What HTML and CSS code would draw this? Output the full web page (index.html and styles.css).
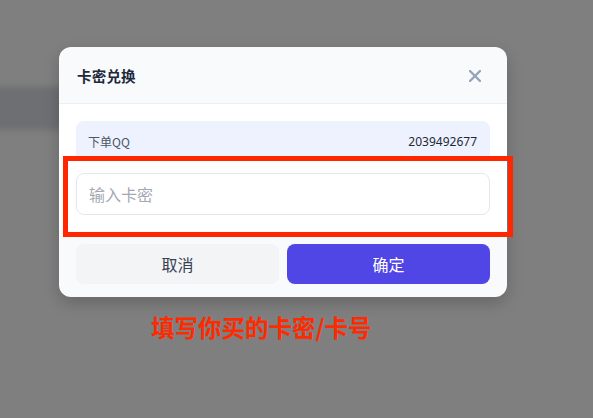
FILE: index.html
```html
<!DOCTYPE html>
<html lang="zh-CN">
<head>
<meta charset="utf-8">
<title>卡密兑换</title>
<link rel="stylesheet" href="styles.css">
</head>
<body>
<div class="stage">
  <div class="bg-band"></div>
  <div class="modal">
    <div class="modal-header">
      <span class="modal-title">卡密兑换</span>
      <svg class="close" width="12" height="12" viewBox="0 0 12 12" aria-hidden="true">
        <path d="M1 1 L11 11 M11 1 L1 11" stroke="#94a3b8" stroke-width="2.4" stroke-linecap="round" fill="none"/>
      </svg>
    </div>
    <div class="modal-body">
      <div class="info-row">
        <span class="info-label">下单QQ</span>
        <span class="info-value">2039492677</span>
      </div>
      <input class="code-input" type="text" placeholder="输入卡密">
    </div>
    <div class="modal-footer">
      <button class="btn btn-cancel">取消</button>
      <button class="btn btn-ok">确定</button>
    </div>
  </div>
  <div class="highlight"></div>
  <div class="note">填写你买的卡密/卡号</div>
</div>
</body>
</html>
```

FILE: styles.css
```css
html, body {
  margin: 0;
  padding: 0;
}
body {
  background: #808080;
  font-family: "Noto Sans", "Noto Sans CJK SC", sans-serif;
}
.stage {
  position: relative;
  width: 593px;
  height: 418px;
  overflow: hidden;
  background: #7f7f7f;
  padding: 47px 0 0 59px;
  box-sizing: border-box;
}
.bg-band {
  position: absolute;
  left: -10px;
  top: 87px;
  width: 75px;
  height: 43px;
  background: #6e6f72;
  filter: blur(3px);
}
.modal {
  position: relative;
  width: 448px;
  background: #f8fafc;
  border-radius: 12px;
  overflow: hidden;
  box-shadow: 0 6px 16px rgba(0, 0, 0, 0.2);
}
.modal-header {
  height: 56px;
  border-bottom: 1px solid #eceff3;
  display: flex;
  align-items: center;
  justify-content: space-between;
  padding: 0 26px 0 18px;
}
.modal-title {
  font-family: "Noto Sans CJK SC", sans-serif;
  font-size: 14.5px;
  font-weight: 700;
  color: #1e293b;
  letter-spacing: 0.2px;
}
.close {
  display: block;
  margin-top: 2px;
}
.modal-body {
  background: #ffffff;
  padding: 17px 17px 16px;
  display: flex;
  flex-direction: column;
  gap: 12px;
}
.info-row {
  height: 40px;
  box-sizing: border-box;
  background: #eef2ff;
  border-radius: 8px;
  padding: 0 13px 0 12px;
  display: flex;
  align-items: center;
  justify-content: space-between;
  font-size: 12px;
}
.info-label {
  font-family: "Noto Sans CJK SC", sans-serif;
  color: #4b5563;
}
.info-value {
  font-family: "Noto Sans", sans-serif;
  color: #1f2937;
}
.code-input {
  display: block;
  width: 100%;
  height: 42px;
  box-sizing: border-box;
  border: 1px solid #e5e7eb;
  border-radius: 8px;
  padding: 0 12px;
  font-family: "Noto Sans CJK SC", sans-serif;
  font-size: 16px;
  color: #111827;
  background: #fff;
  outline: none;
}
.code-input::placeholder {
  color: #a3a8b3;
}
.modal-footer {
  padding: 13px 17px 13px;
  display: flex;
  gap: 8px;
}
.btn {
  flex: 1;
  height: 40px;
  border: none;
  border-radius: 8px;
  font-family: "Noto Sans CJK SC", sans-serif;
  font-size: 16px;
  padding: 0;
}
.btn-cancel {
  background: #f3f4f6;
  color: #374151;
}
.btn-ok {
  background: #4f46e5;
  color: #ffffff;
}
.highlight {
  position: absolute;
  left: 63px;
  top: 156px;
  width: 450px;
  height: 81px;
  box-sizing: border-box;
  border: 5px solid #ff2600;
}
.note {
  position: absolute;
  left: 151px;
  top: 312px;
  font-family: "Noto Sans CJK SC", sans-serif;
  font-size: 23.5px;
  font-weight: 700;
  line-height: 30px;
  color: #ff2a00;
  white-space: nowrap;
}
```
